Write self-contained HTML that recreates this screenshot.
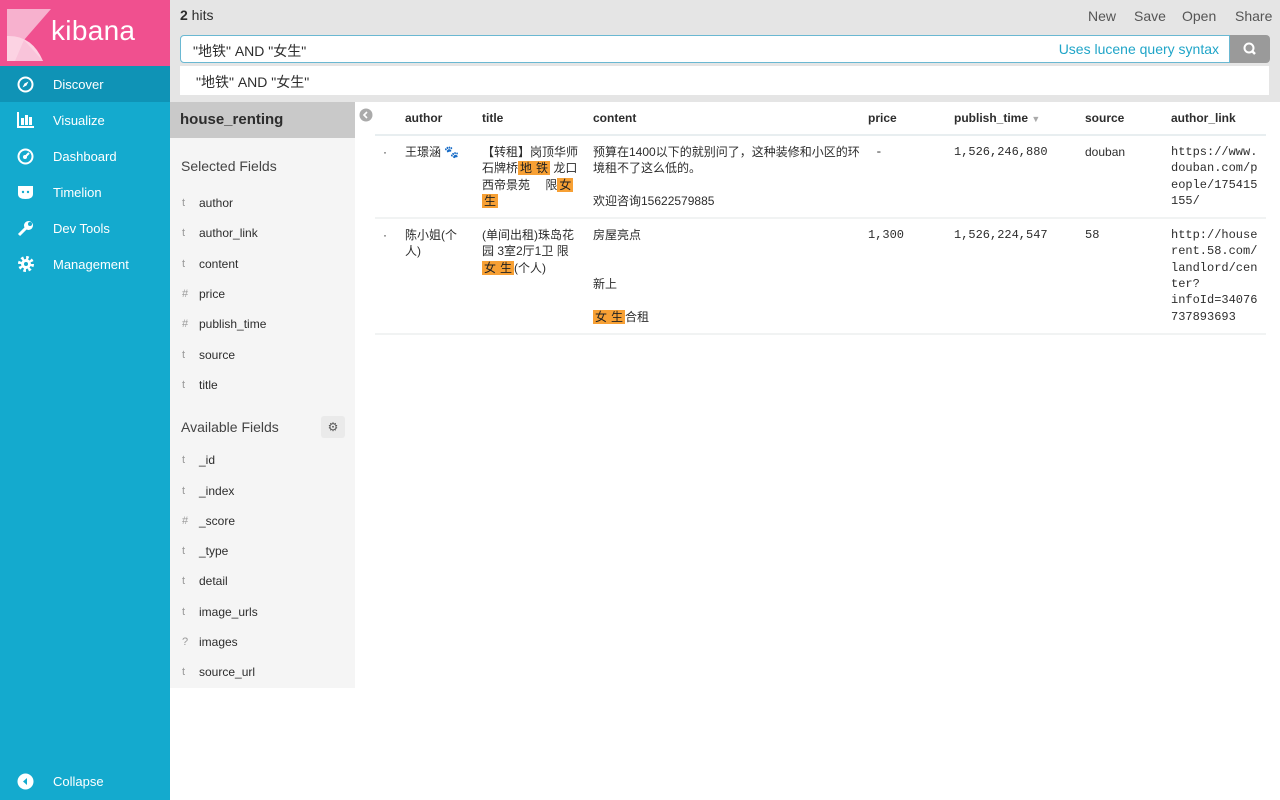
<!DOCTYPE html>
<html><head><meta charset="utf-8"><style>
*{box-sizing:border-box;margin:0;padding:0}
body{width:1280px;height:800px;position:relative;font-family:"Liberation Sans","Noto Sans CJK SC",sans-serif;font-size:13px;color:#2d2d2d;background:#fff;overflow:hidden}
.nav{position:absolute;left:0;top:0;width:170px;height:800px;background:#14aace}
.logo{height:66px;background:#f0508f;position:relative}
.logo span{position:absolute;left:51px;top:15px;font-size:28px;color:#fff;letter-spacing:0.3px}
.item{height:36px;display:flex;align-items:center;color:#fff;font-size:13px}
.item.act{background:#0f93b6}
.item i{width:53px;display:flex;justify-content:center;padding-right:2px}
.top{position:absolute;left:170px;top:0;width:1110px;height:102px;background:#e5e5e5}
.q{position:absolute;left:10px;top:35px;width:1050px;height:28px;background:#fff;border:1px solid #6ab8d2;border-radius:4px 0 0 4px;font-size:14px;padding:5px 12px;color:#2d2d2d}
.q b{font-weight:normal;position:absolute;right:10px;top:5px;color:#20a5c8}
.sbtn{position:absolute;left:1060px;top:35px;width:40px;height:28px;background:#9a9a9a;border-radius:0 4px 4px 0}
.sugg{position:absolute;left:10px;top:66px;width:1089px;height:29px;background:#fff;font-size:14px;padding:6px 16px}
.side{position:absolute;left:170px;top:102px;width:185px;height:586px;background:#f5f5f5}
.side h2{height:36px;background:#c9c9c9;font-size:15px;font-weight:bold;padding:9px 10px}
.side h3{font-weight:normal;font-size:14px;color:#444;padding:0 11px;height:26px}
.f{height:30.3px;font-size:12px;padding-left:12px;display:flex;align-items:center}
.f i{font-style:normal;color:#999;width:17px;font-size:11px}
table{position:absolute;left:375px;top:102px;border-collapse:collapse;width:891px;table-layout:fixed}
th{text-align:left;font-size:12px;font-weight:bold;height:33px;vertical-align:middle;border-bottom:2px solid #e8eef0}
td{vertical-align:top;font-size:12px;line-height:16.3px;padding:8px 0 8px 0;border-bottom:2px solid #f1f3f3}
.m{font-family:"Liberation Mono","Noto Sans CJK SC",monospace}
mark{background:#f7a034;color:#222;padding:0 2px}
.top a{position:absolute;top:8px;font-size:14px;color:#555}
</style></head><body>
<div class="nav">
<div class="logo">
<svg width="44" height="52" style="position:absolute;left:7px;top:9px" viewBox="0 0 44 52"><polygon points="0,0 44,0 17,31 0,31" fill="#f7b1ce"/><path d="M0,27 Q25,26 36,52 L0,52Z" fill="#fcd3e3"/><path d="M17,31 L36,52 L8,52Z" fill="#f9c4da"/></svg>
<span>kibana</span></div>
<div class="item act"><i><svg width="17" height="17" viewBox="0 0 17 17"><circle cx="8.5" cy="8.5" r="7" fill="none" stroke="#fff" stroke-width="2"/><path d="M11.5 5.5 L9.5 9.5 L5.5 11.5 L7.5 7.5Z" fill="#fff"/></svg></i>Discover</div>
<div class="item"><i><svg width="17" height="16"><path d="M1 0v15h16" stroke="#fff" stroke-width="2" fill="none"/><rect x="4" y="6" width="3" height="7" fill="#fff"/><rect x="8" y="3" width="3" height="10" fill="#fff"/><rect x="12" y="5" width="3" height="8" fill="#fff"/></svg></i>Visualize</div>
<div class="item"><i><svg width="17" height="17"><circle cx="8.5" cy="8.5" r="7" fill="none" stroke="#fff" stroke-width="2"/><circle cx="8" cy="9" r="2" fill="#fff"/><path d="M8 9 L12 5" stroke="#fff" stroke-width="2"/></svg></i>Dashboard</div>
<div class="item"><i><svg width="17" height="15"><path d="M1 1h15v8q0 5-7.5 5T1 9Z" fill="#fff"/><circle cx="6" cy="7" r="1.2" fill="#14aace"/><circle cx="11" cy="7" r="1.2" fill="#14aace"/></svg></i>Timelion</div>
<div class="item"><i><svg width="17" height="17"><path d="M2 15 L9 8" stroke="#fff" stroke-width="3"/><circle cx="11.5" cy="5.5" r="4.5" fill="#fff"/><circle cx="13" cy="4" r="2" fill="#14aace"/></svg></i>Dev Tools</div>
<div class="item"><i><svg width="18" height="18" viewBox="0 0 18 18"><circle cx="9" cy="9" r="6" fill="none" stroke="#fff" stroke-width="4" stroke-dasharray="2.4 2.3"/><circle cx="9" cy="9" r="5" fill="#fff"/><circle cx="9" cy="9" r="2" fill="#14aace"/></svg></i>Management</div>
<div class="item" style="position:absolute;top:763px;width:170px"><i><svg width="17" height="17"><circle cx="8.5" cy="8.5" r="8" fill="#fff"/><path d="M10 5 L6 8.5 L10 12Z" fill="#14aace"/></svg></i>Collapse</div>
</div>
<div class="top">
<div style="position:absolute;left:10px;top:7px;font-size:14px"><b>2</b> hits</div>
<a style="left:918px">New</a><a style="left:964px">Save</a><a style="left:1012px">Open</a><a style="left:1065px">Share</a>
<div class="q">"地铁" AND "女生"<b>Uses lucene query syntax</b></div>
<div class="sbtn"><svg width="40" height="28"><circle cx="19" cy="13" r="4.5" fill="none" stroke="#fff" stroke-width="2"/><path d="M22 16 L25 19" stroke="#fff" stroke-width="2.5"/></svg></div>
<div class="sugg">"地铁" AND "女生"</div>
</div>
<div class="side">
<h2>house_renting</h2>
<h3 style="padding-top:20px;height:50px">Selected Fields</h3>
<div class="f"><i>t</i>author</div><div class="f"><i>t</i>author_link</div><div class="f"><i>t</i>content</div><div class="f"><i>#</i>price</div><div class="f"><i>#</i>publish_time</div><div class="f"><i>t</i>source</div><div class="f"><i>t</i>title</div>
<h3 style="padding-top:19px;height:45px;position:relative">Available Fields<span style="position:absolute;left:151px;top:16px;width:24px;height:22px;background:#eaeaea;border-radius:3px;color:#555;font-size:12px;text-align:center;line-height:22px">⚙</span></h3>
<div class="f"><i>t</i>_id</div><div class="f"><i>t</i>_index</div><div class="f"><i>#</i>_score</div><div class="f"><i>t</i>_type</div><div class="f"><i>t</i>detail</div><div class="f"><i>t</i>image_urls</div><div class="f"><i>?</i>images</div><div class="f"><i>t</i>source_url</div>
</div>
<svg width="14" height="14" style="position:absolute;left:359px;top:108px"><circle cx="7" cy="7" r="6.5" fill="#aaa"/><path d="M8 4 L5 7 L8 10" stroke="#fff" stroke-width="1.6" fill="none"/></svg>
<table>
<colgroup><col style="width:30px"><col style="width:77px"><col style="width:111px"><col style="width:275px"><col style="width:86px"><col style="width:131px"><col style="width:86px"><col></colgroup>
<tr><th></th><th>author</th><th>title</th><th>content</th><th>price</th><th>publish_time <span style="color:#aaa;font-size:9px">▼</span></th><th>source</th><th>author_link</th></tr>
<tr><td style="padding-left:8px">·</td><td style="padding-right:14px">王璟涵 <span style="color:#999">🐾</span></td><td style="padding-right:12px">【转租】岗顶华师石牌桥<mark>地</mark><mark>铁</mark> 龙口西帝景苑 　限<mark>女</mark><mark>生</mark></td><td style="padding-right:8px">预算在1400以下的就别问了，这种装修和小区的环境租不了这么低的。<br><br>欢迎咨询15622579885</td><td class="m">&nbsp;-</td><td class="m">1,526,246,880</td><td>douban</td><td class="m" style="word-break:break-all;padding-right:8px">https://www.douban.com/people/175415155/</td></tr>
<tr><td style="padding-left:8px">·</td><td style="padding-right:14px">陈小姐(个人)</td><td style="padding-right:12px">(单间出租)珠岛花园 3室2厅1卫 限<mark>女</mark><mark>生</mark>(个人)</td><td>房屋亮点<br><br><br>新上<br><br><mark>女</mark><mark>生</mark>合租</td><td class="m">1,300</td><td class="m">1,526,224,547</td><td class="m">58</td><td class="m" style="padding-right:8px">http://house<br>rent.58.com/<br>landlord/cen<br>ter?<br>infoId=34076<br>737893693</td></tr>
</table>
</body></html>
